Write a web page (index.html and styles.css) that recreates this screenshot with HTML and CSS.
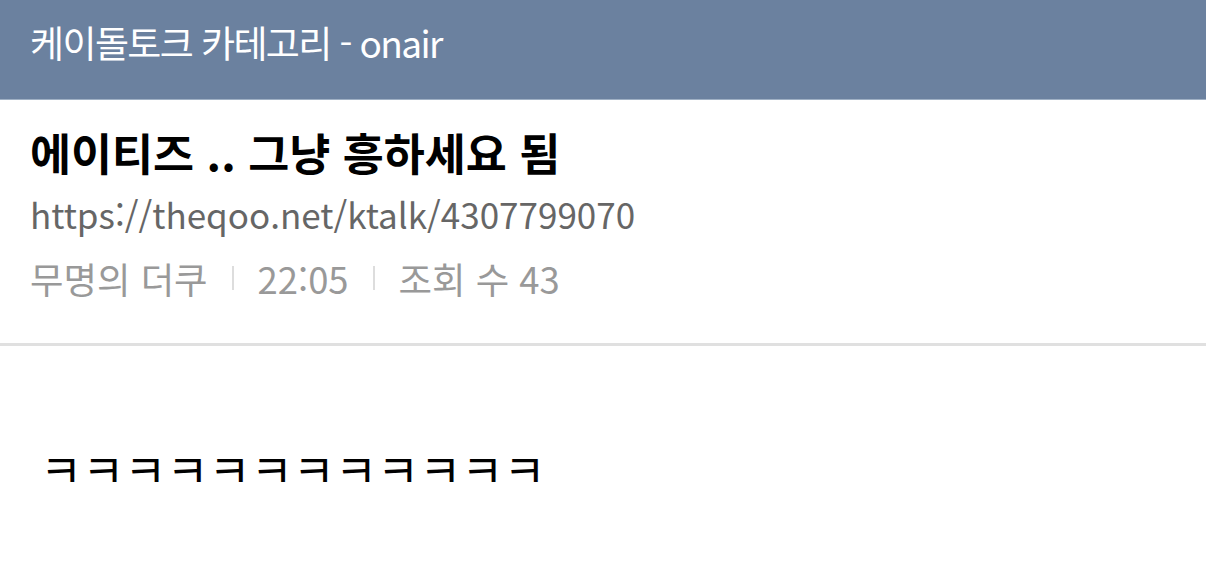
FILE: index.html
```html
<!DOCTYPE html>
<html lang="ko">
<head>
  <meta charset="UTF-8">
  <meta name="viewport" content="width=device-width, initial-scale=1.0">
  <title>케이돌토크 카테고리 - onair</title>
  <link rel="stylesheet" href="styles.css">
</head>
<body>
  <header class="top-bar">
    <span class="top-title">케이돌토크 카테고리 - onair</span>
  </header>

  <div class="post-head">
    <h1 class="post-title">에이티즈 .. 그냥 흥하세요 됨</h1>
    <div class="post-url">https://theqoo.net/ktalk/4307799070</div>
    <div class="post-meta">
      <span>무명의 더쿠</span>
      <span class="sep"></span>
      <span>22:05</span>
      <span class="sep"></span>
      <span>조회 수 43</span>
    </div>
  </div>

  <div class="post-body">
    <p>ㅋㅋㅋㅋㅋㅋㅋㅋㅋㅋㅋㅋ</p>
  </div>
</body>
</html>
```

FILE: styles.css
```css
* {
  margin: 0;
  padding: 0;
  box-sizing: border-box;
}

body {
  font-family: 'Noto Sans CJK KR', 'Noto Sans', sans-serif;
  background-color: #fff;
  color: #000;
  width: 1206px;
  height: 580px;
  overflow: hidden;
}

.top-bar {
  height: 100px;
  background-color: #6b819f;
  border-bottom: 1px solid #9fb0c4;
  padding: 0 30px;
  display: flex;
  align-items: center;
}

.top-title {
  color: #fff;
  font-size: 37px;
  letter-spacing: -1.6px;
  margin-top: -16px;
}

.post-head {
  padding: 24px 30px 0;
  height: 246px;
  border-bottom: 3px solid #e0e0e0;
}

.post-title {
  font-size: 44.6px;
  font-weight: 700;
  line-height: 60px;
  margin-top: -2px;
}

.post-url {
  font-size: 35px;
  color: #666;
  line-height: 50px;
  margin-top: 7px;
}

.post-meta {
  font-size: 36.4px;
  color: #999;
  line-height: 50px;
  margin-top: 14px;
  display: flex;
  align-items: center;
  gap: 24px;
}

.sep {
  width: 2px;
  height: 24px;
  background-color: #ddd;
}

.post-body {
  padding: 92px 40px 0;
}

.post-body p {
  font-size: 45.8px;
  line-height: 60px;
}
```
